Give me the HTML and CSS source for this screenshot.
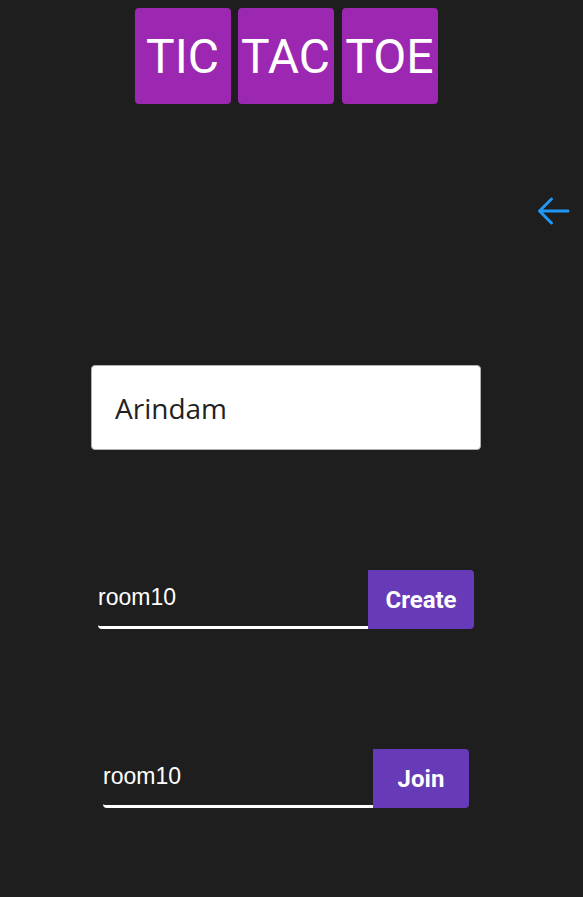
FILE: index.html
```html
<!DOCTYPE html>
<html lang="en">
<head>
<meta charset="utf-8">
<title>Tic Tac Toe</title>
<link rel="stylesheet" href="styles.css">
</head>
<body>
<div class="page">
  <div class="title">
    <div class="tile">TIC</div>
    <div class="tile">TAC</div>
    <div class="tile tile-last">TOE</div>
  </div>
  <div class="back-row">
    <svg class="back" width="34" height="34" viewBox="0 0 34 34" aria-label="Back">
      <path d="M32 17 H4 M15.5 5 L3.5 17 L15.5 29" fill="none" stroke="#2196f3" stroke-width="3" stroke-linecap="round" stroke-linejoin="round"/>
    </svg>
  </div>
  <input class="name-input" type="text" value="Arindam">
  <div class="room-row create-row">
    <input class="room-input" type="text" value="room10">
    <button class="room-btn create-btn">Create</button>
  </div>
  <div class="room-row join-row">
    <input class="room-input" type="text" value="room10">
    <button class="room-btn join-btn">Join</button>
  </div>
</div>
</body>
</html>
```
FILE: styles.css
```css
html, body {
  margin: 0;
  padding: 0;
  background: #1e1e1e;
  height: 100%;
}

.page {
  width: 572px;
  display: flex;
  flex-direction: column;
  align-items: center;
  padding-top: 8px;
}

.title {
  display: flex;
  gap: 7px;
}

.tile {
  width: 96px;
  height: 96px;
  border-radius: 4px;
  background: #9c27b0;
  color: #fff;
  font-family: Roboto, "Liberation Sans", sans-serif;
  font-size: 48px;
  display: flex;
  align-items: center;
  justify-content: center;
}

.tile-last {
  margin-left: 1px;
}

.back-row {
  align-self: stretch;
  display: flex;
  justify-content: flex-end;
  padding-right: 2px;
  margin-top: 90px;
}

.back {
  display: block;
}

.name-input {
  box-sizing: border-box;
  margin-top: 137px;
  width: 390px;
  height: 85px;
  border: 1px solid #b0b0b0;
  border-radius: 4px;
  background: #fff;
  padding: 0 0 0 23px;
  font-family: "Open Sans", "Noto Sans", sans-serif;
  font-size: 28px;
  color: #222;
  outline: none;
}

.room-row {
  display: flex;
  align-items: stretch;
  height: 59px;
}

.create-row {
  margin-top: 120px;
}

.join-row {
  margin-top: 120px;
}

.room-input {
  box-sizing: border-box;
  width: 270px;
  height: 59px;
  background: transparent;
  border: none;
  border-bottom: 3px solid #fff;
  border-bottom-left-radius: 4px;
  padding: 0 0 2px 0;
  color: #fff;
  font-family: "Liberation Sans", Arial, sans-serif;
  font-size: 23px;
  outline: none;
}

.room-btn {
  border: none;
  background: #673ab7;
  color: #fff;
  font-family: Roboto, "Liberation Sans", sans-serif;
  font-weight: 700;
  font-size: 24px;
  border-radius: 0 4px 4px 0;
  padding: 0;
  cursor: pointer;
}

.create-btn {
  width: 106px;
}

.join-btn {
  width: 96px;
}
```
